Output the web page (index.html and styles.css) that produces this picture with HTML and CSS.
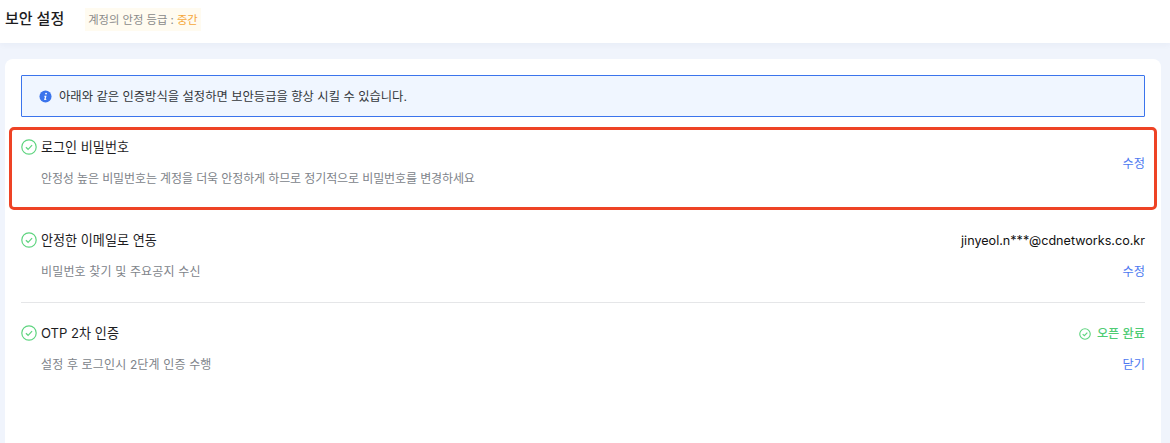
FILE: index.html

```html
<!DOCTYPE html>
<html lang="ko">
<head>
    <meta charset="UTF-8">
    <title>보안 설정</title>
    <meta name="viewport" content="width=device-width, initial-scale=1.0">
    <link rel="stylesheet" href="styles.css">
</head>
<body>
    <header class="topbar">
        <h1 class="page-title">보안 설정</h1>
        <div class="level-tag">계정의 안정 등급 : <span class="level-value">중간</span></div>
    </header>

    <main class="card">
        <div class="notice">
            <svg class="notice-icon" viewBox="0 0 14 14" width="13" height="13">
                <circle cx="7" cy="7" r="6.5" fill="#3b74ec"/>
                <circle cx="7.6" cy="3.9" r="1" fill="#fff"/>
                <path d="M5.9 6.2h2.2l-.9 3.7h.9l-.3 1H5.5l.9-3.7h-.8z" fill="#fff"/>
            </svg>
            아래와 같은 인증방식을 설정하면 보안등급을 향상 시킬 수 있습니다.
        </div>

        <section class="row row-center row-marked">
            <div class="row-main">
                <div class="row-title">
                    <svg class="check" viewBox="0 0 16 16" width="16" height="16">
                        <circle cx="8" cy="8" r="7.2"/>
                        <path d="M4.9 8.2l2.2 2.1 4-4.1"/>
                    </svg>
                    로그인 비밀번호
                </div>
                <div class="row-desc">안정성 높은 비밀번호는 계정을 더욱 안정하게 하므로 정기적으로 비밀번호를 변경하세요</div>
            </div>
            <div class="row-side">
                <a class="link" href="#">수정</a>
            </div>
        </section>

        <section class="row row-line">
            <div class="row-main">
                <div class="row-title">
                    <svg class="check" viewBox="0 0 16 16" width="16" height="16">
                        <circle cx="8" cy="8" r="7.2"/>
                        <path d="M4.9 8.2l2.2 2.1 4-4.1"/>
                    </svg>
                    안정한 이메일로 연동
                </div>
                <div class="row-desc">비밀번호 찾기 및 주요공지 수신</div>
            </div>
            <div class="row-side">
                <div class="side-top">jinyeol.n***@cdnetworks.co.kr</div>
                <a class="link" href="#">수정</a>
            </div>
        </section>

        <section class="row">
            <div class="row-main">
                <div class="row-title">
                    <svg class="check" viewBox="0 0 16 16" width="16" height="16">
                        <circle cx="8" cy="8" r="7.2"/>
                        <path d="M4.9 8.2l2.2 2.1 4-4.1"/>
                    </svg>
                    OTP 2차 인증
                </div>
                <div class="row-desc">설정 후 로그인시 2단계 인증 수행</div>
            </div>
            <div class="row-side">
                <div class="side-top status">
                    <svg class="check check-small" viewBox="0 0 16 16" width="12" height="12">
                        <circle cx="8" cy="8" r="7"/>
                        <path d="M4.9 8.2l2.2 2.1 4-4.1"/>
                    </svg>
                    오픈 완료
                </div>
                <a class="link" href="#">닫기</a>
            </div>
        </section>
    </main>
</body>
</html>
```

FILE: styles.css

```css
:root {
    --blue: #3b74ec;
    --green: #5ed47f;
    --text-color: #1d1d1f;
    --gray: #80848a;
}

* {
    box-sizing: border-box;
}

body {
    margin: 0;
    height: 443px;
    overflow: hidden;
    background-color: #f0f4fc;
    color: var(--text-color);
    font-family: Inter, "Noto Sans CJK KR", sans-serif;
    font-size: 13px;
}

.topbar {
    display: flex;
    align-items: flex-start;
    height: 43px;
    padding: 8px 5px 0;
    background: white;
    box-shadow: 0 2px 6px rgba(30, 50, 100, 0.04);
}

.page-title {
    margin: 1px 21px 0 0;
    font-size: 15px;
    font-weight: 500;
    line-height: 20px;
}

.level-tag {
    height: 23px;
    padding: 1px 3px 0;
    background-color: #fffbf0;
    color: #8a8a8a;
    font-size: 11.3px;
    line-height: 22px;
}

.level-value {
    color: #f5a83c;
}

.card {
    position: relative;
    height: 384px;
    margin: 16px 9px 0 5px;
    padding: 16px;
    background: white;
    border-radius: 8px 8px 0 0;
}

.notice {
    display: flex;
    align-items: center;
    gap: 7px;
    height: 42px;
    margin-bottom: 20px;
    padding-left: 17px;
    background-color: #f0f6ff;
    border: 1px solid var(--blue);
    border-radius: 1px;
    color: #33363b;
    font-size: 12.3px;
}

.notice-icon {
    flex: none;
}

.row {
    display: flex;
    justify-content: space-between;
    margin-bottom: 20px;
    padding-bottom: 20px;
    border-bottom: 1px solid transparent;
}

.row-center {
    align-items: center;
}

.row-line {
    border-bottom-color: #e5e6e8;
}

/* red annotation box drawn over the first row */
.row-marked::after {
    content: "";
    position: absolute;
    left: 4px;
    right: 4px;
    top: 68px;
    height: 83px;
    box-sizing: border-box;
    border: 3px solid #ee4325;
    border-radius: 5px;
    pointer-events: none;
}

.row-title {
    display: flex;
    align-items: center;
    gap: 4px;
    height: 20px;
    font-size: 13.1px;
    line-height: 20px;
}

.row-desc {
    margin-top: 12px;
    padding-left: 20px;
    color: var(--gray);
    font-size: 12px;
    letter-spacing: 0.15px;
    line-height: 20px;
}

.row-marked .row-desc {
    letter-spacing: -0.11px;
}

.check {
    flex: none;
    fill: none;
    stroke: var(--green);
    stroke-width: 1.2;
}

.check-small {
    stroke-width: 1.5;
}

.row-side {
    padding-top: 1px;
    text-align: right;
    font-size: 12.2px;
    line-height: 20px;
}

.side-top {
    height: 20px;
    margin-bottom: 11px;
    color: #111;
    font-size: 12.6px;
}

.status {
    display: flex;
    justify-content: flex-end;
    align-items: center;
    gap: 6px;
    color: #4fcc74;
    font-size: 12.2px;
    font-weight: 500;
}

.link {
    color: #4c78f0;
    text-decoration: none;
}
```
